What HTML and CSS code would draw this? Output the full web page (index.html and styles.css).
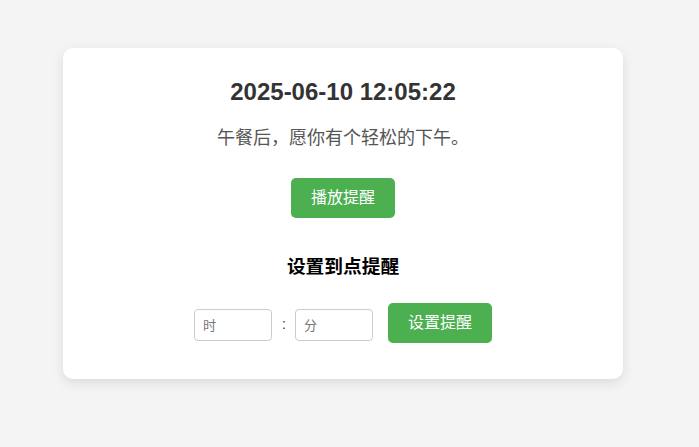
FILE: index.html
```html
<!DOCTYPE html>
<html lang="zh-CN">
<head>
<meta charset="utf-8">
<title>到点提醒</title>
<link rel="stylesheet" href="styles.css">
</head>
<body>
<div class="card">
  <h2 class="clock">2025-06-10 12:05:22</h2>
  <p class="message">午餐后，愿你有个轻松的下午。</p>
  <button class="btn">播放提醒</button>
  <h3 class="subtitle">设置到点提醒</h3>
  <div class="row">
    <input class="field" type="text" placeholder="时">
    <span class="colon">:</span>
    <input class="field" type="text" placeholder="分">
    <button class="btn btn-set">设置提醒</button>
  </div>
</div>
</body>
</html>
```

FILE: styles.css
```css
html, body {
  margin: 0;
  padding: 0;
}
body {
  background: #f4f4f4;
  font-family: "Liberation Sans", Arial, "Noto Sans CJK SC", sans-serif;
  padding: 48px 0 0 63px;
  height: 447px;
  box-sizing: border-box;
}
.card {
  width: 560px;
  box-sizing: border-box;
  background: #fff;
  border-radius: 10px;
  box-shadow: 0 4px 12px rgba(0, 0, 0, 0.1);
  padding: 30px 20px 36px;
  display: flex;
  flex-direction: column;
  align-items: center;
  text-align: center;
}
.clock {
  margin: 0;
  font-size: 24px;
  line-height: 28px;
  font-weight: bold;
  color: #333;
}
.message {
  margin: 20px 0 0;
  font-size: 18px;
  line-height: 24px;
  color: #555;
}
.btn {
  margin: 28px 0 0;
  border: none;
  border-radius: 5px;
  background: #4caf50;
  color: #fff;
  font-family: "Liberation Sans", Arial, "Noto Sans CJK SC", sans-serif;
  font-size: 16px;
  line-height: 20px;
  padding: 10px 20px;
  width: 104px;
  height: 40px;
  cursor: pointer;
}
.subtitle {
  margin: 37px 0 0;
  font-size: 18.72px;
  line-height: 24px;
  font-weight: bold;
  color: #000;
}
.row {
  margin-top: 24px;
  display: flex;
  align-items: flex-start;
}
.field {
  margin-top: 6px;
  width: 78px;
  height: 32px;
  box-sizing: border-box;
  border: 1px solid #ccc;
  border-radius: 4px;
  padding: 0 8px;
  font-family: "Liberation Sans", Arial, "Noto Sans CJK SC", sans-serif;
  font-size: 13px;
  color: #333;
  background: #fff;
}
.field::placeholder {
  color: #757575;
}
.colon {
  margin: 13px 9px 0 10px;
  font-size: 14px;
  line-height: 16px;
  color: #333;
}
.btn-set {
  margin: 0 0 0 15px;
}
```
